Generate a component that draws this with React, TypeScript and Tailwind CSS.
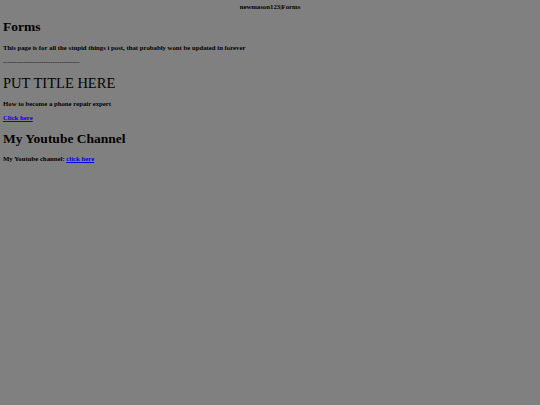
export default function App() {
  return (
    <div
      className="w-[540px] h-[405px] bg-[#808080] text-black flex flex-col px-[3px]"
      style={{ fontFamily: '"Liberation Serif", "Times New Roman", serif' }}
    >
      <div className="text-center font-bold text-[6.75px] leading-[14px] h-[14px]">newmason123|Forms</div>
      <div className="mt-[5px] font-bold text-[13.5px] leading-[16px]">Forms</div>
      <div className="mt-[8px] font-bold text-[6.75px] leading-[10px]">
        This page is for all the stupid things i post, that probably wont be updated in forever
      </div>
      <div className="mt-[4px] text-[6.75px] leading-[10px]">----------------------------------</div>
      <div className="mt-[8px] text-[14.5px] leading-[16px]">PUT TITLE HERE</div>
      <div className="mt-[8px] font-bold text-[6.75px] leading-[10px]">How to become a phone repair expert</div>
      <div className="mt-[4px] font-bold text-[6.75px] leading-[10px]">
        <a href="#" className="text-[#0000ee] underline">Click here</a>
      </div>
      <div className="mt-[8px] font-bold text-[13.5px] leading-[16px]">My Youtube Channel</div>
      <div className="mt-[7px] font-bold text-[6.75px] leading-[10px]">
        My Youtube channel: <a href="#" className="text-[#0000ee] underline">click here</a>
      </div>
    </div>
  );
}
